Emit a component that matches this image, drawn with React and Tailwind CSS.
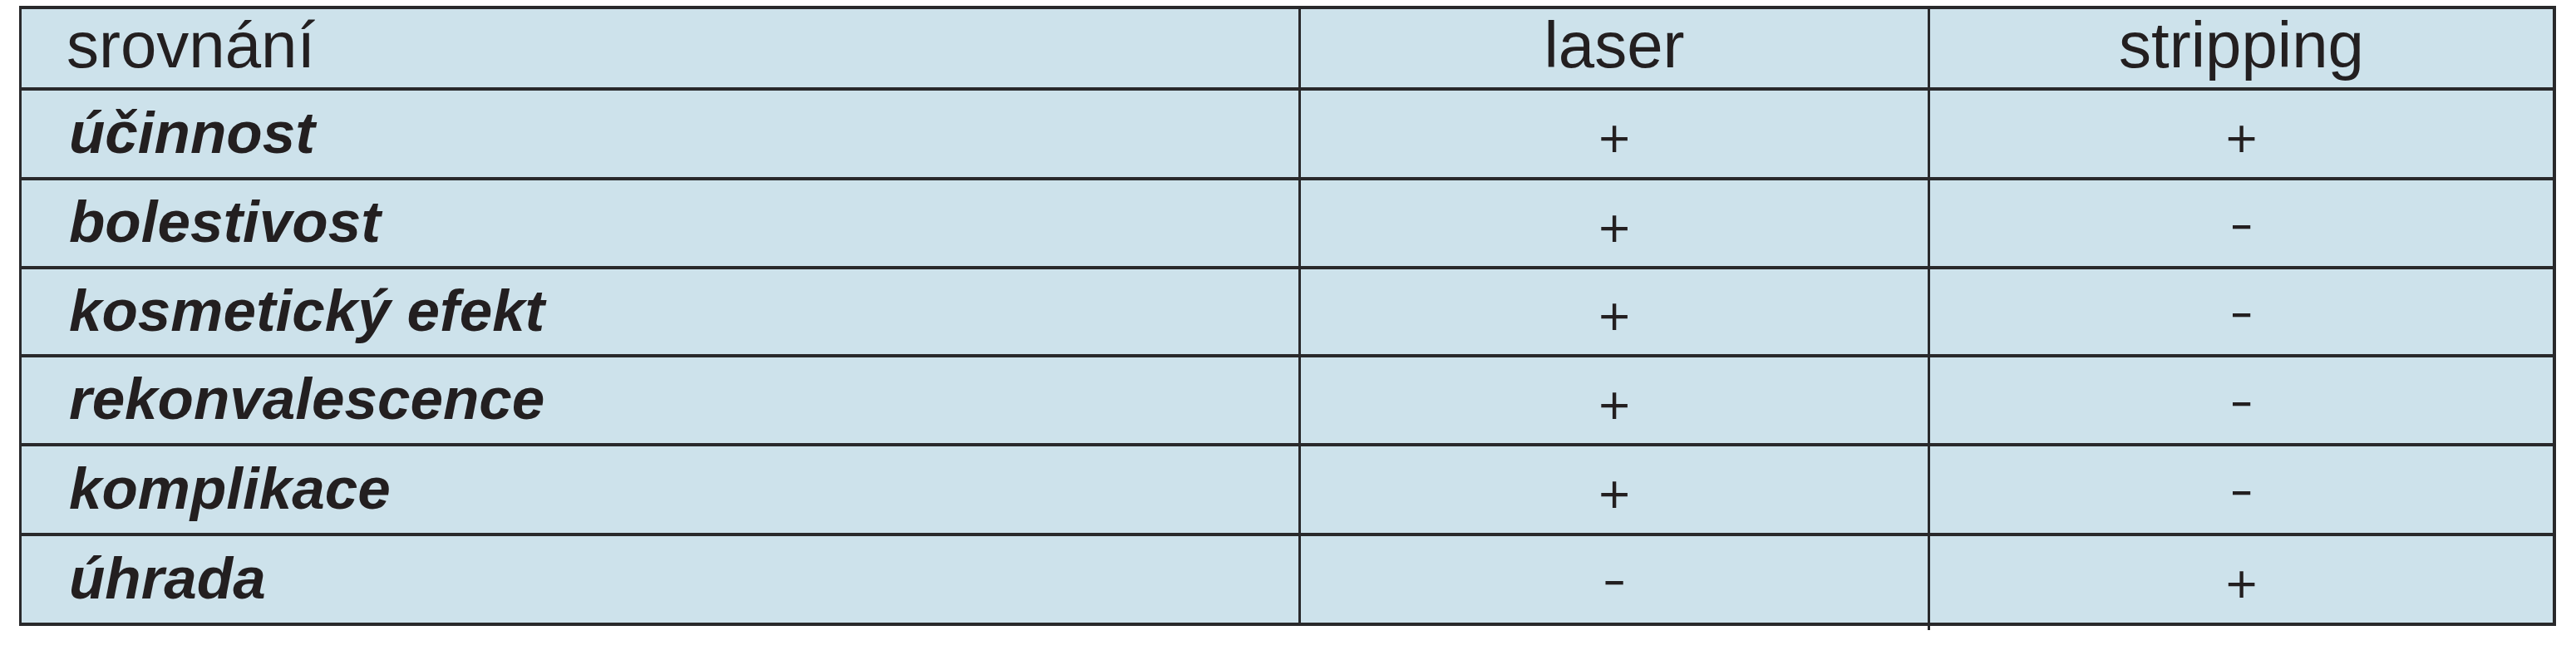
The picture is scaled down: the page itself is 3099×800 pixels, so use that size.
import React from "react";

const rows = [
  { label: "účinnost", laser: "+", strip: "+", h: "h-[108px]" },
  { label: "bolestivost", laser: "+", strip: "-", h: "h-[107px]" },
  { label: "kosmetický efekt", laser: "+", strip: "-", h: "h-[106px]" },
  { label: "rekonvalescence", laser: "+", strip: "-", h: "h-[107px]" },
  { label: "komplikace", laser: "+", strip: "-", h: "h-[108px]" },
  { label: "úhrada", laser: "-", strip: "+", h: "h-[104px]" },
];

function Sign({ children }) {
  return (
    <span
      className="text-[70px] font-light leading-none text-[#231f20]"
      style={{ fontFamily: "Inter, 'Liberation Sans', sans-serif" }}
    >
      {children}
    </span>
  );
}

export default function App() {
  return (
    <div className="w-[3099px] h-[800px] bg-white pt-[7px] pl-[23px]">
      <div
        className="relative w-[3052px] border-t-[4px] border-b-[4px] border-l-[3px] border-r-[4px] border-[#29292b] bg-[#cde2eb] text-[#231f20]"
        style={{ fontFamily: "'Liberation Sans', Arial, sans-serif" }}
      >
        <div className="flex h-[98px] border-b-[4px] border-[#29292b]">
          <div className="w-[1536px] flex items-center pl-[54px] pb-[8px] text-[78px] leading-none">
            srovnání
          </div>
          <div className="w-[757px] border-l-[3px] border-[#29292b] flex items-center justify-center pb-[8px] text-[78px] leading-none">
            laser
          </div>
          <div className="flex-1 border-l-[3px] border-[#29292b] flex items-center justify-center pb-[8px] text-[78px] leading-none">
            stripping
          </div>
        </div>
        {rows.map((r, i) => (
          <div
            key={r.label}
            className={
              "flex " +
              r.h +
              (i < rows.length - 1 ? " border-b-[4px] border-[#29292b]" : "")
            }
          >
            <div className="w-[1536px] flex items-center pl-[57px] pb-[4px] text-[71px] font-bold italic leading-none">
              {r.label}
            </div>
            <div className="w-[757px] border-l-[3px] border-[#29292b] flex items-center justify-center pt-[2px]">
              <Sign>{r.laser}</Sign>
            </div>
            <div className="flex-1 border-l-[3px] border-[#29292b] flex items-center justify-center pt-[2px]">
              <Sign>{r.strip}</Sign>
            </div>
          </div>
        ))}
        <div className="absolute left-[2293px] -bottom-[9px] w-[3px] h-[5px] bg-[#29292b]" />
      </div>
    </div>
  );
}
